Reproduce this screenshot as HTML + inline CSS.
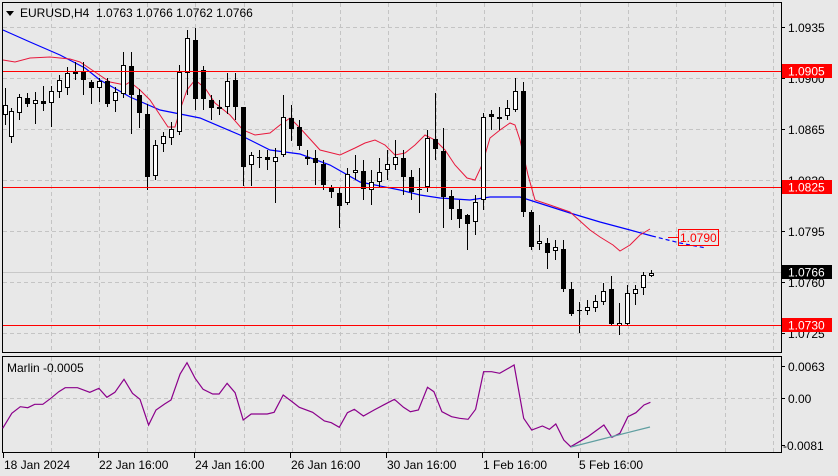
<!DOCTYPE html>
<html><head><meta charset="utf-8"><style>
html,body{margin:0;padding:0;background:#e8e8e8;}
body{width:838px;height:476px;overflow:hidden;position:relative;font-family:"Liberation Sans",sans-serif;}
svg{position:absolute;left:0;top:0;}
text{font-family:"Liberation Sans",sans-serif;font-size:12px;}
.rl{position:absolute;left:3px;width:778px;height:1px;background:#ff0000;}
</style></head><body>
<svg id="s" width="838" height="476" xmlns="http://www.w3.org/2000/svg"></svg>
<div class="rl" style="top:71px"></div>
<div class="rl" style="top:187px"></div>
<div class="rl" style="top:325px"></div>
<script>
var s=document.getElementById('s');var o='';
function L(x1,y1,x2,y2,c,w,d){o+='<line x1="'+x1+'" y1="'+y1+'" x2="'+x2+'" y2="'+y2+'" stroke="'+c+'" stroke-width="'+(w||1)+'"'+(d?' stroke-dasharray="'+d+'"':'')+' shape-rendering="crispEdges"/>';}
function R(x,y,w,h,c){o+='<rect x="'+x+'" y="'+y+'" width="'+w+'" height="'+h+'" fill="'+c+'"/>';}
function T(x,y,t,c,a){o+='<text x="'+x+'" y="'+y+'" fill="'+c+'"'+(a?' text-anchor="'+a+'"':'')+'>'+t+'</text>';}
function P(pts,c,w,d){o+='<polyline fill="none" stroke="'+c+'" stroke-width="'+(w||1)+'"'+(d?' stroke-dasharray="'+d+'"':'')+' points="'+pts.map(function(p){return p.join(',')}).join(' ')+'"/>';}
R(0,0,838,476,'#e8e8e8');
for(var i=0;i<16;i++){var gx=Math.round(3+48.1*(i+1))+.5;if(gx>780)break;L(gx,3,gx,352,'#c4c4c4',1,'4,3');L(gx,357,gx,452,'#c4c4c4',1,'4,3');}
[27,78,129,180,231,282,333].forEach(function(y){L(3,y+.5,780,y+.5,'#c4c4c4',1,'4,3');});
L(3,398.5,780,398.5,'#c4c4c4',1,'4,3');
R(3,272,778,1,'#c8c8c8');
P([[3,30],[30,42],[60,55],[85,68],[100,80],[130,97],[160,110],[200,118],[240,135],[270,150],[300,154],[330,165],[360,182],[400,190],[420,195],[440,198],[470,200],[490,197],[520,197],[545,205],[570,213],[600,222],[630,230],[652,236]],'#0000ff',1.2);
P([[652,236],[680,243],[706,248]],'#0000ff',1.2,'4,3');
P([[3,60],[15,62],[30,58],[50,57],[70,59],[80,62],[95,72],[110,82],[125,85],[130,82],[140,90],[150,100],[160,115],[168,127],[175,127],[180,110],[187,90],[195,80],[205,88],[215,103],[230,115],[243,130],[255,135],[270,133],[280,125],[290,118],[300,128],[320,150],[340,155],[355,148],[365,143],[375,140],[385,145],[395,155],[405,153],[415,145],[425,135],[435,140],[445,150],[455,165],[467,178],[475,180],[482,165],[490,138],[500,130],[510,123],[515,125],[520,140],[528,175],[535,200],[550,205],[570,212],[590,230],[600,237],[613,245],[620,251],[630,245],[640,235],[650,229]],'#e8183c',1);
var c=[['w',105,115,88,125],['w',111,137,108,143],['w',97,113,94,120],['b',98,104,93,107],['w',100,104,92,124],['b',101,104,86,111],['w',91,103,86,127],['w',80,92,75,98],['w',73,88,67,95],['b',72,74,62,80],['b',71,80,62,95],['b',82,88,80,104],['w',81,88,78,102],['b',81,104,78,107],['w',92,101,87,112],['w',65,94,52,98],['b',66,95,52,134],['b',95,113,89,128],['b',114,177,104,190],['w',145,176,140,180],['w',136,144,132,152],['w',129,138,122,145],['w',72,132,65,135],['w',38,73,30,95],['b',40,99,28,110],['b',70,99,66,110],['b',100,108,95,120],['b',107,109,100,115],['w',81,107,73,114],['b',80,107,73,120],['b',107,167,107,186],['w',155,165,152,186],['b',157,158,150,168],['b',157,160,150,170],['w',157,162,148,203],['w',117,155,95,157],['b',118,129,105,141],['b',127,146,120,150],['b',157,159,150,165],['b',158,163,150,185],['b',164,185,160,190],['b',187,192,185,198],['b',193,206,188,228],['w',174,203,168,205],['w',170,173,155,180],['b',171,189,160,200],['w',182,190,170,205],['w',172,182,158,188],['w',164,170,150,180],['w',157,165,140,170],['b',158,177,150,195],['b',177,192,170,200],['b',189,190,168,213],['w',138,187,130,192],['b',139,149,93,160],['b',151,197,128,228],['b',196,209,190,220],['b',209,219,200,228],['b',215,224,214,250],['w',202,222,195,235],['w',117,200,113,210],['b',114,117,110,130],['w',117,119,107,130],['w',108,116,100,120],['w',91,110,78,112],['b',91,212,82,217],['b',212,247,210,250],['w',241,244,225,250],['b',243,253,238,269],['w',247,251,240,260],['b',249,289,240,292],['b',289,314,282,316],['b',310,311,302,333],['w',307,311,300,315],['w',301,308,295,312],['w',291,302,283,305],['b',289,324,276,326],['w',323,326,303,335],['w',293,324,285,325],['w',289,294,285,305],['w',275,288,272,295],['w',273,276,270,277]];
c.forEach(function(k,i){var x=3+8*i;if(x<4)x=5;R(x,k[3],1,k[4]-k[3],'#000');var h=Math.max(1,k[2]-k[1]);
if(k[0]=='b')R(x-2,k[1],5,h,'#000');
else o+='<rect x="'+(x-2)+'.5" y="'+k[1]+'.5" width="4" height="'+Math.max(1,h-1)+'" fill="#fff" stroke="#000" stroke-width="1"/>';});
R(2,2,1,351,'#000');R(2,2,780,1,'#000');R(781,2,1,351,'#000');R(2,352,780,1,'#000');
R(2,356,1,97,'#000');R(2,356,780,1,'#000');R(781,356,1,97,'#000');R(2,452,780,1,'#000');
[[27,'1.0935'],[129,'1.0865'],[231,'1.0795'],[282,'1.0760'],[333,'1.0725'],[78,'1.0900'],[180,'1.0830']].forEach(function(p){R(781,p[0],4,1,'#000');T(788,p[0]+5,p[1],'#000');});
function box(y,t,bg,fg){R(782,y,50,14,bg);T(788,y+11.5,t,fg);}
box(64,'1.0905','#ff0000','#fff');box(180,'1.0825','#ff0000','#fff');box(318,'1.0730','#ff0000','#fff');box(265,'1.0766','#000','#fff');
R(668,237,10,1,'#ff0000');o+='<rect x="678.5" y="229.5" width="40" height="16" fill="none" stroke="#ff0000"/>';T(680,242,'1.0790','#ff0000');
o+='<polygon points="6,11 14,11 10,16" fill="#000"/>';T(20,17,'EURUSD,H4&#160;&#160;1.0763 1.0766 1.0762 1.0766','#000');
var m=[[5,235],[22,190],[38,170],[52,173],[65,163],[80,163],[95,145],[110,125],[122,113],[145,113],[168,127],[185,115],[200,142],[215,127],[232,88],[248,130],[262,148],[278,225],[292,180],[308,162],[320,150],[337,72],[350,38],[365,85],[380,118],[398,132],[410,132],[425,100],[440,128],[455,210],[470,192],[500,192],[513,187],[530,135],[545,153],[560,172],[585,187],[607,213],[620,218],[635,232],[650,188],[663,178],[680,198],[700,180],[720,163],[738,148],[755,172],[768,185],[783,180],[800,112],[812,125],[827,185],[845,200],[860,205],[876,208],[890,178],[905,65],[920,65],[935,70],[962,45],[980,205],[995,240],[1015,228],[1028,238],[1040,222],[1055,270],[1068,290],[1100,260],[1130,225],[1145,262],[1160,250],[1175,200],[1190,188],[1205,165],[1217,157]].map(function(p){return [(p[0]*0.5344).toFixed(1),(p[1]/3+350).toFixed(1)]});
P(m,'#8b008b',1.2);
P([[571,447],[650,427]],'#5f9ea0',1.2);
T(7,372,'Marlin -0.0005','#000');
[[366,'0.0063'],[398,'0.00'],[445,'-0.0081']].forEach(function(p){R(781,p[0],4,1,'#000');T(p[1][0]=='-'?783:788,p[0]+5,p[1],'#000');});
[[3,'18 Jan 2024'],[98,'22 Jan 16:00'],[194,'24 Jan 16:00'],[290,'26 Jan 16:00'],[386,'30 Jan 16:00'],[482,'1 Feb 16:00'],[578,'5 Feb 16:00']].forEach(function(p){R(p[0],453,1,5,'#000');T(p[0]+1,469,p[1],'#000');});
s.innerHTML=o;
</script>
</body></html>
